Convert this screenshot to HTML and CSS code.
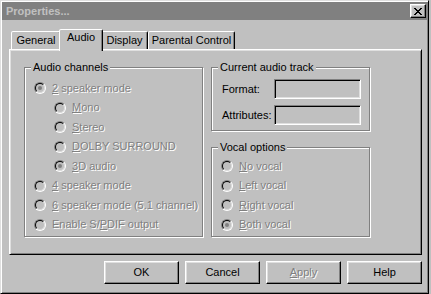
FILE: index.html
```html
<!DOCTYPE html>
<html>
<head>
<meta charset="utf-8">
<title>Properties</title>
<link rel="stylesheet" href="styles.css">
</head>
<body>
<div class="window">
  <div class="titlebar">
    <span class="title">Properties...</span>
    <span class="close">
      <svg width="8" height="7" viewBox="0 0 8 7" shape-rendering="crispEdges">
        <path fill="#000" d="M0 0h2v1h-2zM6 0h2v1h-2zM1 1h2v1h-2zM5 1h2v1h-2zM2 2h4v1h-4zM3 3h2v1h-2zM2 4h4v1h-4zM1 5h2v1h-2zM5 5h2v1h-2zM0 6h2v1h-2zM6 6h2v1h-2z"/>
      </svg>
    </span>
  </div>
  <div class="body">
    <div class="tabs">
      <div class="tab t-general">General</div>
      <div class="tab t-audio active">Audio</div>
      <div class="tab t-display">Display</div>
      <div class="tab t-parental">Parental Control</div>
    </div>
    <div class="panel">
      <div class="grid">
        <div class="group g-channels">
          <span class="gtitle">Audio channels</span>
          <div class="opt"><span class="radio on"></span><span class="dis"><u>2</u> speaker mode</span></div>
          <div class="opt sub"><span class="radio"></span><span class="dis"><u>M</u>ono</span></div>
          <div class="opt sub"><span class="radio"></span><span class="dis"><u>S</u>tereo</span></div>
          <div class="opt sub"><span class="radio"></span><span class="dis"><u>D</u>OLBY SURROUND</span></div>
          <div class="opt sub"><span class="radio on"></span><span class="dis"><u>3</u>D audio</span></div>
          <div class="opt"><span class="radio"></span><span class="dis"><u>4</u> speaker mode</span></div>
          <div class="opt"><span class="radio"></span><span class="dis"><u>6</u> speaker mode (5.1 channel)</span></div>
          <div class="opt"><span class="radio"></span><span class="dis">Enable S/<u>P</u>DIF output</span></div>
        </div>
        <div class="group g-track">
          <span class="gtitle">Current audio track</span>
          <div class="field"><span class="label">Format:</span><span class="edit"></span></div>
          <div class="field"><span class="label">Attributes:</span><span class="edit"></span></div>
        </div>
        <div class="group g-vocal">
          <span class="gtitle">Vocal options</span>
          <div class="opt"><span class="radio"></span><span class="dis"><u>N</u>o vocal</span></div>
          <div class="opt"><span class="radio"></span><span class="dis"><u>L</u>eft vocal</span></div>
          <div class="opt"><span class="radio"></span><span class="dis"><u>R</u>ight vocal</span></div>
          <div class="opt"><span class="radio on"></span><span class="dis"><u>B</u>oth vocal</span></div>
        </div>
      </div>
    </div>
    <div class="buttons">
      <div class="btn">OK</div>
      <div class="btn">Cancel</div>
      <div class="btn"><span class="dis"><u>A</u>pply</span></div>
      <div class="btn">Help</div>
    </div>
  </div>
</div>
</body>
</html>
```

FILE: styles.css
```css
* { box-sizing: border-box; }
html, body {
  margin: 0;
  padding: 0;
  background: #c0c0c0;
}
body {
  font-family: "Liberation Sans", Arial, sans-serif;
  font-size: 11px;
  line-height: 13px;
  color: #000;
}
.window {
  width: 429px;
  height: 294px;
  border: 1px solid;
  border-color: #dfdfdf #000 #000 #dfdfdf;
  box-shadow: inset 1px 1px 0 #fff, inset -1px -1px 0 #808080;
  padding: 1px;
  background: #c0c0c0;
}
.titlebar {
  height: 18px;
  background: #808080;
  display: flex;
  align-items: center;
  padding-left: 4px;
}
.title {
  font-weight: bold;
  color: #c0c0c0;
}
.close {
  margin-left: auto;
  margin-right: 1px;
  width: 16px;
  height: 14px;
  background: #c0c0c0;
  border: 1px solid;
  border-color: #fff #000 #000 #fff;
  box-shadow: inset -1px -1px 0 #808080, inset 1px 1px 0 #dfdfdf;
  display: flex;
  align-items: center;
  justify-content: center;
}
.close svg { display: block; margin-left: -1px; }
.body {
  padding: 9px 0 0 7px;
}
.tabs {
  display: flex;
  align-items: flex-end;
  height: 20px;
  padding-left: 2px;
}
.tab {
  height: 18px;
  border: 1px solid;
  border-bottom: 0;
  border-color: #fff #000 transparent #fff;
  border-radius: 2px 2px 0 0;
  box-shadow: inset -1px 0 0 #808080;
  background: #c0c0c0;
  text-align: center;
  padding-top: 2px;
}
.t-general { width: 50px; }
.t-audio { width: 40px; }
.t-display { width: 47px; }
.t-parental { width: 87px; }
.tab.active {
  position: relative;
  z-index: 1;
  width: 44px;
  height: 22px;
  margin: 0 -2px -2px;
  padding-top: 1px;
}
.panel {
  width: 413px;
  height: 206px;
  border: 1px solid;
  border-color: #fff #000 #000 #fff;
  box-shadow: inset 1px 1px 0 #dfdfdf, inset -1px -1px 0 #808080;
  padding: 17px 0 0 14px;
}
.grid {
  display: grid;
  grid-template-columns: 179px 159px;
  grid-template-rows: 64px 90px;
  column-gap: 8px;
  row-gap: 16px;
}
.group {
  position: relative;
  border: 1px solid #808080;
  box-shadow: inset 1px 1px 0 #fff, 1px 1px 0 #fff;
}
.gtitle {
  position: absolute;
  top: -7px;
  left: 6px;
  padding: 0 2px;
  background: #c0c0c0;
}
.g-channels {
  grid-row: 1 / span 2;
  padding: 10.25px 0 0 9px;
}
.g-track {
  padding: 11px 0 0 10px;
}
.g-vocal {
  padding: 8.25px 0 0 9px;
}
.opt {
  display: flex;
  align-items: center;
  height: 19.5px;
}
.opt.sub { padding-left: 20px; }
.radio {
  position: relative;
  flex: none;
  width: 12px;
  height: 12px;
  margin-right: 6px;
  border-radius: 50%;
  border: 1px solid;
  border-color: #808080 #fff #fff #808080;
  background: #c0c0c0;
}
.radio::before {
  content: "";
  position: absolute;
  inset: 0;
  border-radius: 50%;
  border: 1px solid;
  border-color: #000 #dfdfdf #dfdfdf #000;
}
.radio.on::after {
  content: "";
  position: absolute;
  left: 3px;
  top: 3px;
  width: 4px;
  height: 4px;
  border-radius: 50%;
  background: #808080;
}
.dis {
  color: #808080;
  text-shadow: 1px 1px 0 #fff;
}
u { text-underline-offset: 1px; }
.field {
  display: flex;
  align-items: center;
  height: 20px;
  margin-bottom: 6px;
}
.label { width: 52px; }
.edit {
  width: 87px;
  height: 20px;
  border: 1px solid;
  border-color: #808080 #fff #fff #808080;
  box-shadow: inset 1px 1px 0 #000, inset -1px -1px 0 #dfdfdf;
  background: #c0c0c0;
}
.buttons {
  display: flex;
  justify-content: flex-end;
  gap: 6px;
  width: 413px;
  margin-top: 6px;
}
.btn {
  width: 75px;
  height: 23px;
  border: 1px solid;
  border-color: #fff #000 #000 #fff;
  box-shadow: inset -1px -1px 0 #808080, inset 1px 1px 0 #dfdfdf;
  display: flex;
  align-items: center;
  justify-content: center;
}
```
